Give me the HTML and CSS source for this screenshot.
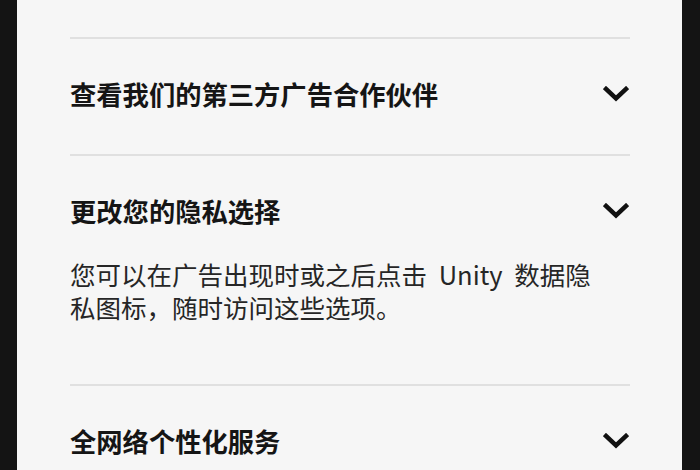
FILE: index.html
```html
<!DOCTYPE html>
<html lang="zh-CN">
<head>
<meta charset="utf-8">
<link rel="stylesheet" href="styles.css">
</head>
<body>
<div class="frame">
  <div class="panel">
    <section class="item">
      <div class="item-head">
        <span class="item-title">查看我们的第三方广告合作伙伴</span>
        <svg class="chevron" width="26" height="16" viewBox="0 0 26 16"><polyline points="3,3 13,12.5 23,3" fill="none" stroke="#111" stroke-width="4.5" stroke-linecap="square" stroke-linejoin="miter"/></svg>
      </div>
    </section>
    <section class="item item-open">
      <div class="item-head">
        <span class="item-title">更改您的隐私选择</span>
        <svg class="chevron" width="26" height="16" viewBox="0 0 26 16"><polyline points="3,3 13,12.5 23,3" fill="none" stroke="#111" stroke-width="4.5" stroke-linecap="square" stroke-linejoin="miter"/></svg>
      </div>
      <p class="item-body">您可以在广告出现时或之后点击 Unity 数据隐私图标，随时访问这些选项。</p>
    </section>
    <section class="item">
      <div class="item-head">
        <span class="item-title">全网络个性化服务</span>
        <svg class="chevron" width="26" height="16" viewBox="0 0 26 16"><polyline points="3,3 13,12.5 23,3" fill="none" stroke="#111" stroke-width="4.5" stroke-linecap="square" stroke-linejoin="miter"/></svg>
      </div>
    </section>
  </div>
</div>
</body>
</html>
```
FILE: styles.css
```css
html, body {
  margin: 0;
  padding: 0;
  background: #141414;
}
body {
  font-family: "Noto Sans CJK SC", "Noto Sans", sans-serif;
  width: 700px;
  height: 470px;
  overflow: hidden;
}
.frame {
  padding: 0 18px 0 17px;
  height: 470px;
  box-sizing: border-box;
  overflow: hidden;
}
.panel {
  background: #f6f6f6;
  height: 100%;
  padding: 37px 52px 0 53px;
  box-sizing: border-box;
  overflow: hidden;
}
.item {
  border-top: 2px solid #e0e0e0;
}
.item-head {
  display: flex;
  align-items: center;
  justify-content: space-between;
  padding: 38px 0 43px;
}
.item-title {
  font-size: 26.3px;
  line-height: 34px;
  font-weight: 700;
  color: #151515;
}
.chevron {
  display: block;
  margin-right: 1px;
}
.item-open .item-head {
  padding-bottom: 29px;
}
.item-body {
  margin: 0 24px 0 0;
  padding-bottom: 61px;
  font-size: 25.5px;
  line-height: 33px;
  word-spacing: 6px;
  color: #262626;
}
```
